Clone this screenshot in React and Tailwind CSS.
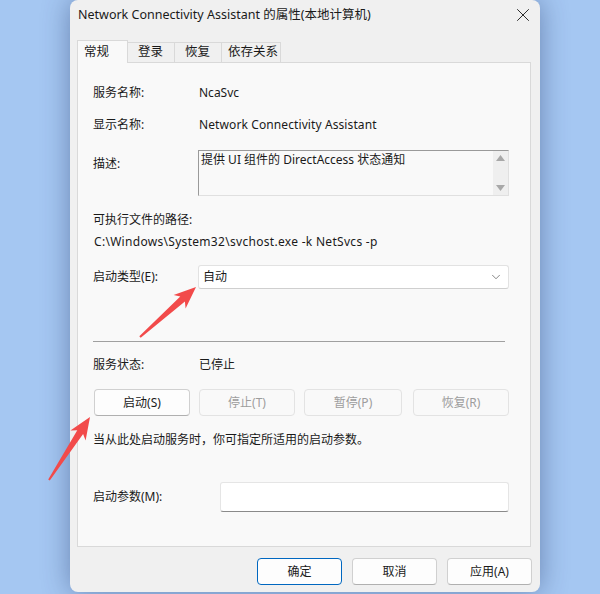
import { X, ChevronDown } from 'lucide-react';

const font = "font-['Segoe_UI','Noto_Sans','Noto_Sans_CJK_SC',sans-serif]";

function Button({ children, disabled, primary, className = '' }) {
  return (
    <div
      className={`h-[27px] flex items-center justify-center rounded-[4px] text-[12px] ${
        primary
          ? 'border border-[#0067c0] bg-[#fdfdfd] text-[#1a1a1a]'
          : disabled
          ? 'border border-[#e3e3e3] bg-[#f9f9f9] text-[#9d9d9d]'
          : 'border border-[#d0d0d0] border-b-[#b0b0b0] bg-[#fdfdfd] text-[#1a1a1a]'
      } ${className}`}
    >
      {children}
    </div>
  );
}

export default function App() {
  return (
    <div className={`relative w-[600px] h-[594px] bg-[#a5c7f2] pl-[70px] overflow-hidden ${font}`}>
      <div className="w-[470px] h-[592px] bg-[#f0f0f0] rounded-lg shadow-[0_0_28px_rgba(30,50,100,0.45)] flex flex-col">
        {/* Title bar */}
        <div className="h-[30px] flex items-center justify-between pl-[8px] pr-[6px]">
          <span className="text-[12.5px] text-[#1a1a1a]">Network Connectivity Assistant 的属性(本地计算机)</span>
          <X size={22} strokeWidth={1} className="text-[#1a1a1a]" />
        </div>

        {/* Tabs */}
        <div className="mt-[10px] ml-[7px] flex items-end h-[22px] text-[12.5px] text-[#1a1a1a]">
          <div className="relative z-10 w-[51px] h-[23px] mb-[-1px] bg-[#f9f9f9] border border-b-0 border-[#d9d9d9] flex items-center pl-[6px]">
            常规
          </div>
          <div className="w-[47px] h-[20px] border border-l-0 border-b-0 border-[#d9d9d9] flex items-center pl-[10px]">登录</div>
          <div className="w-[47px] h-[20px] border border-l-0 border-b-0 border-[#d9d9d9] flex items-center pl-[10px]">恢复</div>
          <div className="w-[59px] h-[20px] border border-l-0 border-b-0 border-[#d9d9d9] flex items-center pl-[6px]">依存关系</div>
        </div>

        {/* Panel */}
        <div className="ml-[7px] w-[454px] h-[485px] bg-[#f9f9f9] border border-[#d9d9d9] pl-[15px] pr-[21px] text-[12px] text-[#1a1a1a]">
          <div className="mt-[20px] h-[20px] flex items-center">
            <span className="w-[106px]">服务名称:</span>
            <span>NcaSvc</span>
          </div>
          <div className="mt-[12px] h-[20px] flex items-center">
            <span className="w-[106px]">显示名称:</span>
            <span className="tracking-[0.1px]">Network Connectivity Assistant</span>
          </div>
          <div className="mt-[15px] flex items-start">
            <span className="w-[105px] mt-[4px] h-[20px] flex items-center">描述:</span>
            <div className="flex-1 h-[46px] bg-[#f9f9f9] border border-[#9a9a9a] border-r-[#e0e0e0] border-b-[#e0e0e0] flex">
              <div className="flex-1 pl-[2px] leading-[18px]">提供 UI 组件的 DirectAccess 状态通知</div>
              <div className="w-[15px] bg-[#efefef] flex flex-col items-center justify-between py-[4px]">
                <svg width="9" height="6" viewBox="0 0 9 6"><path d="M4.5 0 L9 6 L0 6 Z" fill="#a8a8a8" /></svg>
                <svg width="9" height="6" viewBox="0 0 9 6"><path d="M0 0 L9 0 L4.5 6 Z" fill="#a8a8a8" /></svg>
              </div>
            </div>
          </div>
          <div className="mt-[14px] h-[20px] flex items-center">可执行文件的路径:</div>
          <div className="mt-[2px] h-[20px] flex items-center pl-[1px] tracking-[0.3px]">C:\Windows\System32\svchost.exe -k NetSvcs -p</div>
          <div className="mt-[13px] flex items-center">
            <span className="w-[105px]">启动类型(E):</span>
            <div className="flex-1 h-[24px] bg-white border border-[#e2e2e2] border-b-[#cfcfcf] rounded-[3px] flex items-center justify-between pl-[4px] pr-[5px]">
              <span>自动</span>
              <ChevronDown size={14} strokeWidth={1.1} className="text-[#444]" />
            </div>
          </div>
          <div className="mt-[52px] w-[412px] h-px bg-[#a0a0a0]" />
          <div className="mt-[13px] h-[20px] flex items-center">
            <span className="w-[106px]">服务状态:</span>
            <span>已停止</span>
          </div>
          <div className="mt-[14px] flex">
            <Button className="w-[96px] ml-[1px]">启动(S)</Button>
            <Button disabled className="w-[96px] ml-[9px]">停止(T)</Button>
            <Button disabled className="w-[98px] ml-[9px]">暂停(P)</Button>
            <Button disabled className="w-[96px] ml-[11px]">恢复(R)</Button>
          </div>
          <div className="mt-[14px] h-[20px] flex items-center">当从此处启动服务时，你可指定所适用的启动参数。</div>
          <div className="mt-[32px] flex items-center">
            <span className="w-[127px]">启动参数(M):</span>
            <div className="flex-1 h-[30px] bg-white border border-[#e5e5e5] border-b-[#8a8a8a] rounded-[3px]" />
          </div>
        </div>

        {/* Footer buttons */}
        <div className="mt-[11px] flex justify-end gap-[10px] pr-[8px]">
          <Button primary className="w-[85px]">确定</Button>
          <Button className="w-[85px]">取消</Button>
          <Button className="w-[85px]">应用(A)</Button>
        </div>
      </div>

      {/* Annotation arrows */}
      <svg className="absolute inset-0 pointer-events-none" width="600" height="594">
        <polygon
          points="196,287 185.6,308.4 184.9,301.6 140.7,337.7 139.3,336.3 180.3,296.4 173.6,295.0"
          fill="#f24a4a"
        />
        <polygon
          points="90,417 85.6,440.4 83.1,434.0 49.8,480.5 48.2,479.5 77.3,430.2 70.4,430.6"
          fill="#f24a4a"
        />
      </svg>
    </div>
  );
}
